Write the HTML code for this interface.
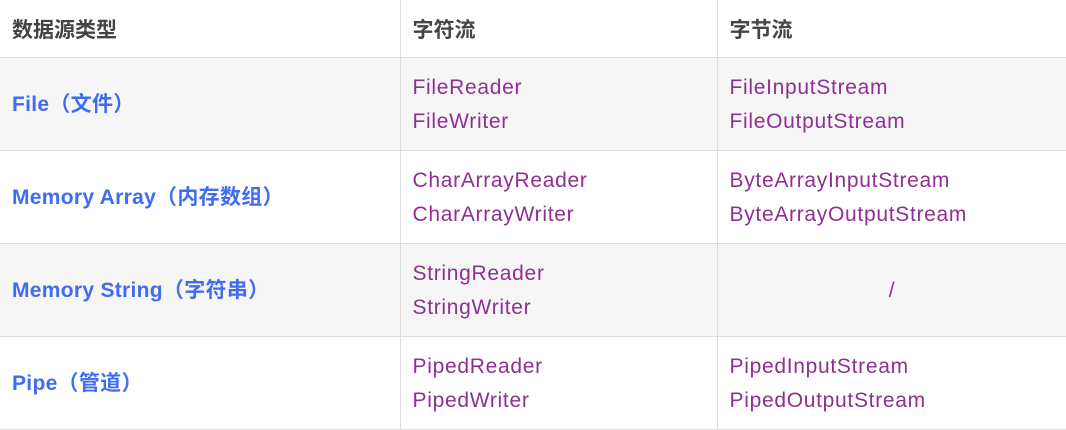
<!DOCTYPE html>
<html><head><meta charset="utf-8"><style>
html,body{margin:0;padding:0;background:#fff;}
body{width:1066px;height:428px;overflow:hidden;font-family:"Liberation Sans","Noto Sans CJK SC",sans-serif;font-size:21px;}
table{border-collapse:collapse;width:1067px;table-layout:fixed;}
td,th{border:1px solid #ddd;padding:1px 0 0 12px;text-align:left;vertical-align:middle;}
tr>*:first-child{border-left:none;}
th{height:56px;color:#444;font-weight:bold;border-top:none;}
td{height:91px;line-height:34px;color:#8f2f93;letter-spacing:0.7px;}
tr.g td{background:#f6f6f6;}
td.k{color:#3e6cf4;font-weight:bold;letter-spacing:0.3px;}
td.c{text-align:center;padding:1px 0 0 0;}
</style></head><body>
<table>
<colgroup><col style="width:400px"><col style="width:317px"><col style="width:350px"></colgroup>
<tr><th>数据源类型</th><th>字符流</th><th>字节流</th></tr>
<tr class="g"><td class="k">File（文件）</td><td>FileReader<br>FileWriter</td><td>FileInputStream<br>FileOutputStream</td></tr>
<tr><td class="k">Memory Array（内存数组）</td><td>CharArrayReader<br>CharArrayWriter</td><td>ByteArrayInputStream<br>ByteArrayOutputStream</td></tr>
<tr class="g"><td class="k">Memory String（字符串）</td><td>StringReader<br>StringWriter</td><td class="c">/</td></tr>
<tr><td class="k">Pipe（管道）</td><td>PipedReader<br>PipedWriter</td><td>PipedInputStream<br>PipedOutputStream</td></tr>
</table>
</body></html>
